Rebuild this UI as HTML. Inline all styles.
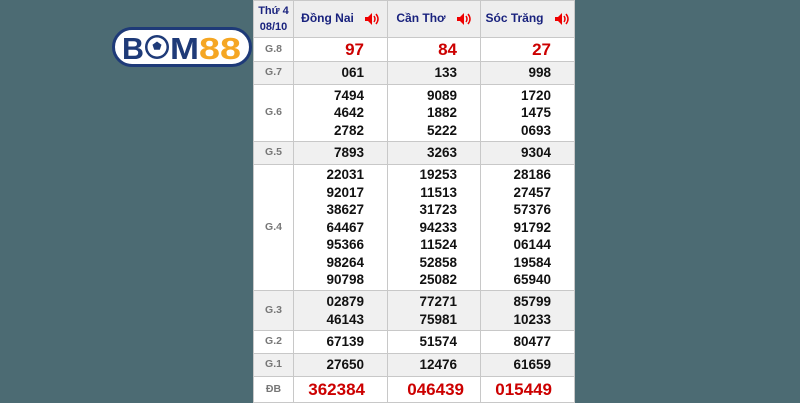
<!DOCTYPE html>
<html><head><meta charset="utf-8"><style>
body{margin:0;width:800px;height:400px;background:#4c6b73;position:relative;overflow:hidden;font-family:"Liberation Sans",Arial,sans-serif}
table{position:absolute;left:253px;top:0;width:321px;border-collapse:collapse;background:#fff;table-layout:fixed}
td{border:1px solid #c8c8c8;padding:0;font-weight:bold;font-size:13.5px;color:#111;text-align:right;padding-right:23px;line-height:17.6px;overflow:hidden}
td.l{text-align:center;padding:0;color:#777;font-size:10.5px;font-weight:bold}
tr.g td{background:#f0f0f0}
.h td{background:#eeeeee;color:#1a237e;font-size:12px;text-align:center;padding:0;height:36px}
.h td.l{color:#1a237e;font-size:11px;line-height:16px}
.r td{color:#cc0000;font-size:17px}
.r td.l{color:#777;font-size:10.5px}
.spk{display:inline-block;vertical-align:middle;margin-left:10px}
</style></head><body>
<svg style="position:absolute;left:112px;top:27px" width="140" height="40" viewBox="0 0 140 40">
<rect x="1.5" y="1.5" width="137" height="37" rx="18.5" fill="#fff" stroke="#1e3a78" stroke-width="3"/>
<text x="10" y="32" font-family="Liberation Sans" font-weight="bold" font-size="31" fill="#1e3a78" textLength="22" lengthAdjust="spacingAndGlyphs">B</text>
<circle cx="45" cy="20" r="12" fill="#1e3a78"/><circle cx="45" cy="20" r="9.5" fill="#fff"/>
<path d="M45 14.5l4.5 3.3-1.7 5h-5.6l-1.7-5z" fill="#1e3a78"/>
<text x="58" y="32" font-family="Liberation Sans" font-weight="bold" font-size="31" fill="#1e3a78" textLength="29" lengthAdjust="spacingAndGlyphs">M</text>
<text x="87" y="32" font-family="Liberation Sans" font-weight="bold" font-size="31" fill="#f5a623" textLength="42" lengthAdjust="spacingAndGlyphs">88</text>
</svg>
<table>
<colgroup><col style="width:40px"><col style="width:94px"><col style="width:93px"><col style="width:94px"></colgroup>
<tr class="h"><td class="l">Thứ 4<br>08/10</td><td>Đồng Nai<svg class="spk" width="16" height="14" viewBox="0 0 16 14"><path d="M1 5h3l4-4v12l-4-4H1z" fill="#e00"/><path d="M10 4q2 3 0 6M12 2q4 5 0 10" stroke="#e00" stroke-width="1.5" fill="none"/></svg></td><td>Cần Thơ<svg class="spk" width="16" height="14" viewBox="0 0 16 14"><path d="M1 5h3l4-4v12l-4-4H1z" fill="#e00"/><path d="M10 4q2 3 0 6M12 2q4 5 0 10" stroke="#e00" stroke-width="1.5" fill="none"/></svg></td><td>Sóc Trăng<svg class="spk" width="16" height="14" viewBox="0 0 16 14"><path d="M1 5h3l4-4v12l-4-4H1z" fill="#e00"/><path d="M10 4q2 3 0 6M12 2q4 5 0 10" stroke="#e00" stroke-width="1.5" fill="none"/></svg></td></tr>
<tr class="r" style="height:24px"><td class="l">G.8</td><td>97</td><td>84</td><td>27</td></tr>
<tr class="g" style="height:23px"><td class="l">G.7</td><td>061</td><td>133</td><td>998</td></tr>
<tr style="height:57px"><td class="l">G.6</td><td>7494<br>4642<br>2782</td><td>9089<br>1882<br>5222</td><td>1720<br>1475<br>0693</td></tr>
<tr class="g" style="height:23px"><td class="l">G.5</td><td>7893</td><td>3263</td><td>9304</td></tr>
<tr style="height:126px"><td class="l">G.4</td><td>22031<br>92017<br>38627<br>64467<br>95366<br>98264<br>90798</td><td>19253<br>11513<br>31723<br>94233<br>11524<br>52858<br>25082</td><td>28186<br>27457<br>57376<br>91792<br>06144<br>19584<br>65940</td></tr>
<tr class="g" style="height:40px"><td class="l">G.3</td><td>02879<br>46143</td><td>77271<br>75981</td><td>85799<br>10233</td></tr>
<tr style="height:23px"><td class="l">G.2</td><td>67139</td><td>51574</td><td>80477</td></tr>
<tr class="g" style="height:23px"><td class="l">G.1</td><td>27650</td><td>12476</td><td>61659</td></tr>
<tr class="r" style="height:26px"><td class="l">ĐB</td><td style="padding-right:22px">362384</td><td style="padding-right:16px">046439</td><td style="padding-right:22px">015449</td></tr>
</table>
</body></html>
